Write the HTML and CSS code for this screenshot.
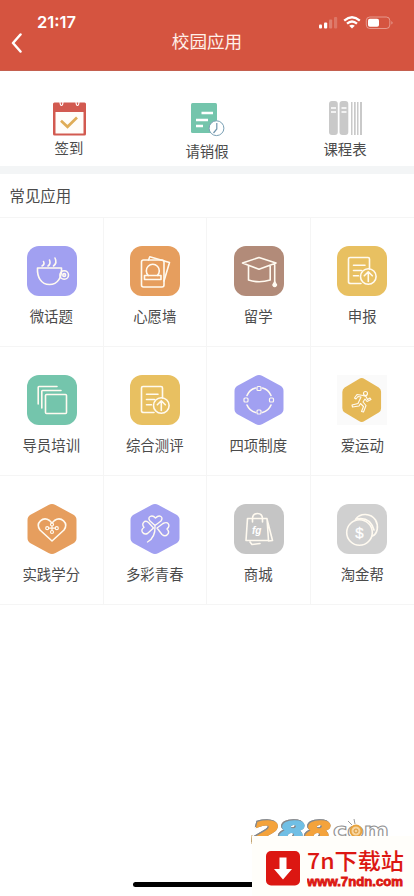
FILE: index.html
```html
<!DOCTYPE html>
<html lang="zh-CN">
<head>
<meta charset="utf-8">
<meta name="viewport" content="width=device-width, initial-scale=1">
<title>校园应用</title>
<link rel="stylesheet" href="styles.css">
</head>
<body>
<svg width="0" height="0" class="defs" aria-hidden="true">
  <symbol id="report" viewBox="0 0 50 50">
    <path d="M24 37.500H14Q11.500 37.500 11.500 36V13Q11.500 11.500 13 11.500H31Q32.500 11.500 32.500 13V23M16.500 19.200H28M16.500 24.500H24.500M16.500 29.700H21.500"/>
    <circle cx="31.300" cy="30.500" r="7.800"/>
    <path d="M31.300 35.500V26M27.300 29.800L31.300 25.800L35.300 29.800"/>
  </symbol>
  <symbol id="hex" viewBox="0 0 50 50">
    <path d="M21.500 1Q25-1 28.500 1L46.500 10.800Q49.500 12.500 49.500 16V34Q49.500 37.500 46.500 39.200L28.500 49Q25 51 21.500 49L3.500 39.200Q.5 37.500 .5 34V16Q.5 12.500 3.500 10.800Z"/>
  </symbol>
</svg>
<div class="app">
  <header class="header">
    <div class="status">
      <span class="time">21:17</span>
      <svg class="status-icons" width="76" height="16" viewBox="0 0 76 16">
        <g fill="#fff"><rect x="1" y="9.500" width="3" height="4" rx="1"/><rect x="6" y="7.500" width="3.200" height="6" rx="1"/><rect x="11" y="4.500" width="3.200" height="9" rx="1" opacity=".25"/><rect x="16" y="2" width="3.200" height="11.500" rx="1" opacity=".2"/></g>
        <g fill="none" stroke="#fff" stroke-width="2.300"><path d="M26.200 5.600Q34-1.200 41.800 5.600"/><path d="M29 8.700Q34 4.300 39 8.700"/></g>
        <path d="M31.200 10.700Q34 8.600 36.800 10.700L34 13.600Z" fill="#fff"/>
        <rect x="48.300" y="2" width="23.500" height="11.500" rx="3.500" fill="none" stroke="#fff" opacity=".4"/>
        <rect x="50" y="3.800" width="11" height="8" rx="1.800" fill="#fff"/>
        <path d="M73.500 6Q75.500 7.800 73.500 9.600Z" fill="#fff" opacity=".5"/>
      </svg>
    </div>
    <div class="nav">
      <svg class="back" width="12" height="20" viewBox="0 0 12 20"><path d="M10.500 1.500L3 10L10.500 18.500" fill="none" stroke="#fff" stroke-width="2.500" stroke-linecap="round" stroke-linejoin="round"/></svg>
      <h1>校园应用</h1>
    </div>
  </header>
  <section class="quick">
    <a class="quick-item">
      <svg width="36" height="36" viewBox="0 0 36 36">
        <rect x="2" y="2.500" width="33" height="33" rx="1.500" fill="#d25a50"/><rect x="4.500" y="12" width="28" height="21.500" fill="#fffdfa"/>
        <path d="M9 1Q9 5.500 10.500 5.500T12 1M25 1Q25 5.500 26.500 5.500T28 1" fill="none" stroke="#fff" stroke-width="1.200"/>
        <path d="M10 20.800L16.500 26.800L26 17.500" fill="none" stroke="#dfad59" stroke-width="2.700"/>
      </svg>
      <span>签到</span>
    </a>
    <a class="quick-item leave">
      <svg width="36" height="36" viewBox="0 0 36 36">
        <rect x="2" y="1" width="26" height="30" rx="1.500" fill="#74c5ac"/>
        <path d="M12.500 11H24M7 18H19M7 24H14" stroke="#fff" stroke-width="2.500"/>
        <circle cx="27.500" cy="26.200" r="7.400" fill="#fff" stroke="#789fb4"/><path d="M27.800 21V27L24.500 31" fill="none" stroke="#7195ad" stroke-width="1.200"/>
      </svg>
      <span>请销假</span>
    </a>
    <a class="quick-item schedule">
      <svg width="36" height="36" viewBox="0 0 36 36" fill="#c9c9c9">
        <rect x="2" y="1" width="8.800" height="34" rx="3"/><rect x="12.500" y="1" width="8.800" height="34" rx="3"/>
        <path d="M24 2h1.500v33H24zM27 2h1.700v33H27zM30 2h1.500v33H30zM33 2h2v33h-2z"/>
        <path d="M4 8h5M4 12h5M14.500 8h5M14.500 12h5" stroke="#fff" stroke-width="1.500"/>
      </svg>
      <span>课程表</span>
    </a>
  </section>
  <h2>常见应用</h2>
  <main class="grid">
    <a class="cell"><svg class="icon purple" viewBox="0 0 50 50"><path d="M10.500 22H34.500C35 31 31 38.500 22.500 38.500S10 31 10.500 22Z"/><circle cx="37.200" cy="29" r="4.300"/><circle cx="37.200" cy="29" r="1.400"/><path d="M15 20Q18 18.500 16.500 15.500M21 20Q24 18 22.500 14M26.500 20Q30.500 17 28 12"/></svg><span>微话题</span></a>
    <a class="cell"><svg class="icon orange" viewBox="0 0 50 50"><rect x="11.500" y="14" width="22.500" height="27" rx="2"/><path d="M18.300 29.500A6.500 6.500 0 1 1 27.300 29.500"/><rect x="14.500" y="29.500" width="16.500" height="4"/><path d="M18.500 14L19.800 10.800L39.500 16.500L34 35"/></svg><span>心愿墙</span></a>
    <a class="cell"><svg class="icon brown" viewBox="0 0 50 50"><path d="M8.500 17L25 11.500L42 17L25 23.200ZM14.500 20V34Q25 37.500 36.200 34V20M40.700 18V36"/><path d="M40.700 36L39 39Q40.700 42 42.400 39Z" fill="#fff"/></svg><span>留学</span></a>
    <a class="cell"><svg class="icon yellow" viewBox="0 0 50 50"><use href="#report"/></svg><span>申报</span></a>
    <a class="cell"><svg class="icon green" viewBox="0 0 50 50"><rect x="18.500" y="19.500" width="21" height="19" rx="1"/><path d="M11.200 29V12.200Q11.200 11.500 12 11.500H30M14.800 33V16.200Q14.800 15.500 15.500 15.500H34"/></svg><span>导员培训</span></a>
    <a class="cell"><svg class="icon yellow" viewBox="0 0 50 50"><use href="#report"/></svg><span>综合测评</span></a>
    <a class="cell"><svg class="icon" viewBox="0 0 50 50"><use href="#hex" fill="#a1a0f1" stroke="none"/><path d="M13 20.500Q15.500 14.500 21.500 13M28.500 13Q34.500 14.500 37 20.500M37 30Q34.500 36 28.500 37.500M21.500 37.500Q15.500 36 13 30"/><g stroke-width="1.200"><rect x="23" y="11.500" width="4" height="4" rx="1"/><rect x="35.500" y="23" width="4" height="4" rx="1"/><rect x="23" y="35" width="4" height="4" rx="1"/><rect x="10" y="23" width="4" height="4" rx="1"/></g></svg><span>四项制度</span></a>
    <a class="cell"><svg class="icon pale" viewBox="0 0 50 50"><use href="#hex" x="2.700" y="3" width="44" height="44" fill="#e5b856" stroke="none" class="sport-hex"/><g transform="translate(0 .5)" stroke-width="1.100"><circle cx="28.500" cy="18" r="2"/><path d="M26 20L20 19L17.500 22.500L19 23.500L21 21L24 21.500L21 28L15 29.500L15.500 31.500L22 30.500L23.500 28L26.500 31L24.500 36L26.500 36.500L29 30L26 26.500L28 23.500L30 26L34 24L33 22.500L30.500 24L29 21Z"/></g></svg><span>爱运动</span></a>
    <a class="cell"><svg class="icon" viewBox="0 0 50 50"><use href="#hex" fill="#e69e5e" stroke="none"/><path d="M25 37L13 26C8 19 16 12 22.500 16.500L25 19L27.500 16.500C34 12 42 19 37 26Z"/><g stroke-width="1.200"><circle cx="25" cy="20.500" r="1.500"/><circle cx="25" cy="28" r="1.500"/><circle cx="20.200" cy="24.200" r="1.500"/><circle cx="29.800" cy="24.200" r="1.500"/><path d="M21.700 24.200H28.300M25 22V26.500"/></g></svg><span>实践学分</span></a>
    <a class="cell"><svg class="icon" viewBox="0 0 50 50"><use href="#hex" fill="#a1a0f1" stroke="none"/><g stroke-width="1.400"><path d="M25 21.500L20 17C16.500 13 22 10 25.500 14C29.500 10 34 13 31 17Z"/><path d="M23.500 24L18.500 18.500C14.500 15.500 11 19.500 14 23.500C9.500 26 13 31.500 17.500 29.500Z"/><path d="M27 24L33 19.500C38 17 41 21 37 25C41 29 36 34 32 30.500Z"/><path d="M25 22.500Q25.500 33.500 17.500 38"/></g></svg><span>多彩青春</span></a>
    <a class="cell"><svg class="icon gray" viewBox="0 0 50 50"><path d="M13.500 14.500H33L34.500 36.500H12ZM33 15L38.500 36.500L34.500 37M16 38L18 40.500L26 39.500"/><path d="M18.500 18V15Q18.500 9.500 23.500 9.500T28.500 15V18"/><text x="18" y="29.500" class="bag-text">fg</text></svg><span>商城</span></a>
    <a class="cell"><svg class="icon silver" viewBox="0 0 50 50"><circle cx="22.500" cy="28.500" r="12.800"/><path d="M18.500 15.500C23 8.500 34 9 38.500 16C42 22 40.500 30 35.500 32M19 15Q33 12 37 26"/><text x="22.500" y="33.700" text-anchor="middle" class="coin-text">$</text></svg><span>淘金帮</span></a>
  </main>
  <div class="home-indicator"></div>
  <svg class="site-logo" width="144" height="30" viewBox="0 0 144 30">
    <g class="logo-num">
      <text x="3" y="25" textLength="26" lengthAdjust="spacingAndGlyphs" fill="#f4a33c" stroke="#f4a33c">2</text>
      <text x="29" y="25" textLength="26" lengthAdjust="spacingAndGlyphs" fill="#70bfe5" stroke="#70bfe5">8</text>
      <text x="55" y="25" textLength="26" lengthAdjust="spacingAndGlyphs" fill="#f4a33c" stroke="#f4a33c">8</text>
    </g>
    <text x="83" y="21" textLength="56" lengthAdjust="spacingAndGlyphs" fill="#fff" stroke="#909090" class="logo-com">com</text>
    <circle cx="106" cy="14" r="5.500" fill="#f8d59e" stroke="#e7a33f" stroke-width="2"/><circle cx="106" cy="14" r="2" fill="none" stroke="#d99535"/><path d="M102 8L98 4M105 7L104 2" stroke="#999"/>
    <path d="M2 18Q1 22 2 27" fill="none" stroke="#caa66b"/>
  </svg>
  <aside class="download">
    <svg width="34" height="35" viewBox="0 0 34 35"><rect width="34" height="34.500" rx="5" fill="#dc1712"/><path d="M13.500 6.500H20.500V18H26L17 28.500L8 18H13.500Z" fill="#fff"/></svg>
    <svg width="98" height="50" viewBox="0 0 98 50" fill="#dc1712">
      <text x="0" y="28.500" textLength="97" lengthAdjust="spacingAndGlyphs" class="download-name">7n下载站</text>
      <text x="0" y="45.500" textLength="96" lengthAdjust="spacingAndGlyphs" class="download-url">www.7ndn.com</text>
    </svg>
  </aside>
</div>
</body>
</html>
```
FILE: styles.css
```css
* { box-sizing: border-box; }
body { margin: 0; background: #fff; color: #4b4b4b; font-family: "Noto Sans CJK SC", sans-serif; }
.defs { position: absolute; }
.app { position: relative; width: 414px; height: 896px; overflow: hidden; background: #fff; }
.header { height: 71px; background: #d55440; border-bottom: 1px solid #c4604f; color: #fff; }
.status { height: 29px; padding: 14px 20px 0 37px; display: flex; justify-content: space-between; }
.time { font: 600 16.500px/17px Inter, sans-serif; }
.status-icons { margin-top: 1px; }
.nav { height: 26px; display: flex; align-items: center; padding-left: 10px; }
.back { margin-top: 1px; }
h1 { margin: -2px 0 0; flex: 1; padding-right: 22px; text-align: center; font-size: 17.600px; line-height: 26px; font-weight: 400; color: #fff0e9; }
.quick { height: 103px; padding-top: 29px; display: grid; grid-template-columns: repeat(3, 1fr); border-bottom: 8px solid #f3f5f6; }
.quick-item { display: flex; flex-direction: column; align-items: center; font-size: 14.400px; line-height: 20px; }
.quick-item span { margin-top: 2px; }
.quick-item svg { flex: none; }
.leave { padding-top: 2px; }
.leave span { margin-top: 3px; }
.schedule span { margin-top: 3px; }
h2 { height: 44px; margin: 0; padding-left: 9.500px; font-size: 15.400px; line-height: 42px; font-weight: 400; border-bottom: 1px solid #f5f5f5; }
.grid { display: grid; grid-template-columns: repeat(4, 1fr); grid-auto-rows: 129px; }
.cell { display: flex; flex-direction: column; align-items: center; padding-top: 28px; border-right: 1px solid #f5f5f5; border-bottom: 1px solid #f5f5f5; font-size: 14.400px; line-height: 20px; }
.cell:nth-child(4n) { border-right: 0; }
.cell span { margin-top: 10px; }
.icon { flex: none; width: 50px; height: 50px; margin-left: 1px; border-radius: 12px; fill: none; stroke: #fffaf0; stroke-width: 1.600; stroke-linecap: round; stroke-linejoin: round; }
.cell:nth-child(4n) .icon { margin-left: 0; }
.purple { background: #a1a0f1; }
.orange { background: #e69e5e; }
.brown { background: #b28b79; }
.yellow { background: #e8c061; }
.green { background: #74c5ac; }
.gray { background: #c5c5c5; }
.silver { background: #d0d0d0; }
.pale { background: #fafafa; border-radius: 0; }
.sport-hex { transform: scaleX(.9); transform-origin: 25px 25px; }
.bag-text { font: italic 700 10px "Liberation Sans", sans-serif; fill: #fff; stroke: none; }
.coin-text { font: 400 15px "Liberation Sans", sans-serif; fill: #fff; stroke: #fff; stroke-width: .3; }
.home-indicator { position: absolute; left: 133px; top: 882px; width: 148px; height: 5px; border-radius: 3px; background: #000; }
.site-logo { position: absolute; left: 250px; top: 817px; }
.logo-num { font: italic 700 28px "DejaVu Sans", sans-serif; stroke-width: 1.500; filter: drop-shadow(.6px 0 0 #85888c) drop-shadow(-.6px -.4px 0 #85888c); }
.logo-com { font: 700 21px "DejaVu Sans", sans-serif; stroke-width: 1; }
.download { position: absolute; left: 252px; top: 836px; width: 162px; height: 60px; display: flex; gap: 7px; padding: 9px 0 0 14px; background: #fffefa; }
.download > svg:first-child { margin-top: 6px; }
.download-name { font: 500 22px "Noto Sans CJK SC", sans-serif; }
.download-url { font: 700 12px "Liberation Sans", sans-serif; stroke: #dc1712; stroke-width: .8; }
.download > svg:last-child { margin-top: -5px; }
```
